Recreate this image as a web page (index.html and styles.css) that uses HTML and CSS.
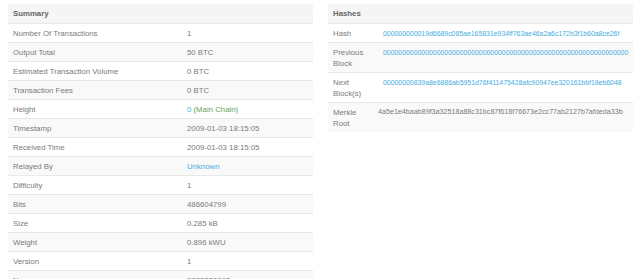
FILE: index.html
```html
<!DOCTYPE html>
<html>
<head>
<meta charset="utf-8">
<link rel="stylesheet" href="styles.css">
</head>
<body>
<div class="page">
  <div class="panel summary">
    <div class="row head"><div class="cell">Summary</div></div>
    <div class="row"><div class="cell">Number Of Transactions</div><div class="cell">1</div></div>
    <div class="row"><div class="cell">Output Total</div><div class="cell">50 BTC</div></div>
    <div class="row"><div class="cell">Estimated Transaction Volume</div><div class="cell">0 BTC</div></div>
    <div class="row"><div class="cell">Transaction Fees</div><div class="cell">0 BTC</div></div>
    <div class="row"><div class="cell">Height</div><div class="cell"><a class="link">0</a> <span class="green">(Main Chain)</span></div></div>
    <div class="row"><div class="cell">Timestamp</div><div class="cell">2009-01-03 18:15:05</div></div>
    <div class="row"><div class="cell">Received Time</div><div class="cell">2009-01-03 18:15:05</div></div>
    <div class="row"><div class="cell">Relayed By</div><div class="cell"><a class="link">Unknown</a></div></div>
    <div class="row"><div class="cell">Difficulty</div><div class="cell">1</div></div>
    <div class="row"><div class="cell">Bits</div><div class="cell">486604799</div></div>
    <div class="row"><div class="cell">Size</div><div class="cell">0.285 kB</div></div>
    <div class="row"><div class="cell">Weight</div><div class="cell">0.896 kWU</div></div>
    <div class="row"><div class="cell">Version</div><div class="cell">1</div></div>
    <div class="row"><div class="cell">Nonce</div><div class="cell">2083236893</div></div>
  </div>
  <div class="panel hashes">
    <div class="row head"><div class="cell">Hashes</div></div>
    <div class="row"><div class="cell">Hash</div><div class="cell hash"><a class="link">000000000019d6689c085ae165831e934ff763ae46a2a6c172b3f1b60a8ce26f</a></div></div>
    <div class="row"><div class="cell">Previous Block</div><div class="cell hash"><a class="link">0000000000000000000000000000000000000000000000000000000000000000</a></div></div>
    <div class="row"><div class="cell">Next Block(s)</div><div class="cell hash"><a class="link">00000000839a8e6886ab5951d76f411475428afc90947ee320161bbf18eb6048</a></div></div>
    <div class="row narrow"><div class="cell">Merkle Root</div><div class="cell hash merkle">4a5e1e4baab89f3a32518a88c31bc87f618f76673e2cc77ab2127b7afdeda33b</div></div>
  </div>
</div>
</body>
</html>
```
FILE: styles.css
```css
html, body {
  margin: 0;
  padding: 0;
  background: #ffffff;
}
body {
  font-family: "Liberation Sans", Arial, sans-serif;
  font-size: 7.8px;
  line-height: 11px;
  color: #7a7a7a;
}
.page {
  display: grid;
  grid-template-columns: 305px 305px;
  column-gap: 15px;
  padding: 4px 7px 0 8px;
}
.panel {
  display: flex;
  flex-direction: column;
}
.row {
  display: grid;
  border-top: 1px solid #e8e8e8;
}
.row:first-child {
  border-top: none;
}
.row:nth-child(odd) {
  background: #f9f9f9;
}
.summary .row {
  grid-template-columns: 174px 1fr;
  height: 19px;
  box-sizing: border-box;
}
.hashes .row {
  grid-template-columns: 50px 1fr;
}
.hashes .row.narrow {
  grid-template-columns: 45px 1fr;
}
.row.head {
  display: block;
  background: #f5f5f5;
  font-weight: bold;
  color: #666666;
  height: 19px;
  box-sizing: border-box;
}
.cell {
  padding: 4px 5px 3px 5px;
  white-space: nowrap;
}
.hashes .cell {
  white-space: normal;
}
.hashes .cell.hash {
  font-size: 6.9px;
  white-space: nowrap;
}
.hashes .cell.merkle {
  font-size: 7.15px;
}
.link {
  color: #45ade0;
  text-decoration: none;
}
.green {
  color: #5fa25b;
}
```
